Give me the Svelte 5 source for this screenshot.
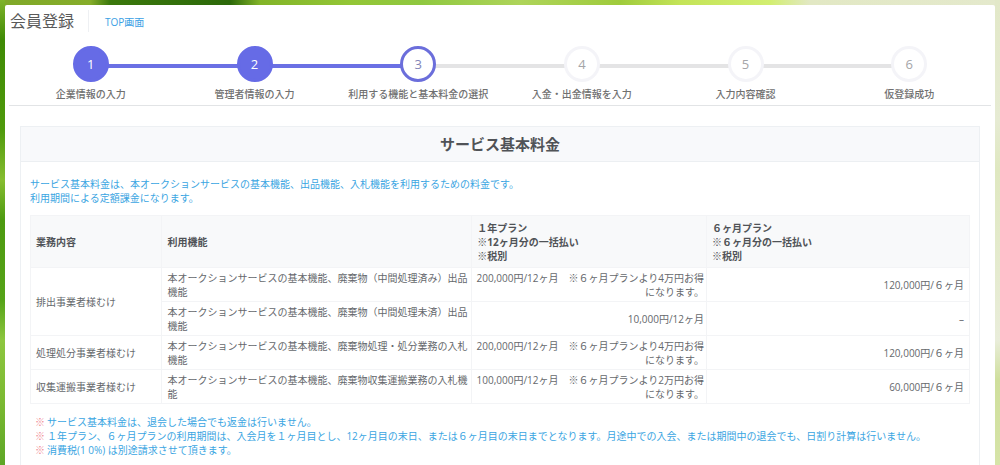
<script lang="ts">
  interface Row {
    target?: string;
    span?: number;
    feature: string;
    yearly: string;
    saving?: string;
    halfYear: string;
  }

  const steps = [
    '企業情報の入力',
    '管理者情報の入力',
    '利用する機能と基本料金の選択',
    '入金・出金情報を入力',
    '入力内容確認',
    '仮登録成功'
  ];
  const current = 3;

  const rows: Row[] = [
    {
      target: '排出事業者様むけ',
      span: 2,
      feature: '本オークションサービスの基本機能、廃棄物（中間処理済み）出品機能',
      yearly: '200,000円/12ヶ月',
      saving: '※６ヶ月プランより4万円お得',
      halfYear: '120,000円/６ヶ月'
    },
    {
      feature: '本オークションサービスの基本機能、廃棄物（中間処理未済）出品機能',
      yearly: '10,000円/12ヶ月',
      halfYear: '–'
    },
    {
      target: '処理処分事業者様むけ',
      feature: '本オークションサービスの基本機能、廃棄物処理・処分業務の入札機能',
      yearly: '200,000円/12ヶ月',
      saving: '※６ヶ月プランより4万円お得',
      halfYear: '120,000円/６ヶ月'
    },
    {
      target: '収集運搬事業者様むけ',
      feature: '本オークションサービスの基本機能、廃棄物収集運搬業務の入札機能',
      yearly: '100,000円/12ヶ月',
      saving: '※６ヶ月プランより2万円お得',
      halfYear: '60,000円/６ヶ月'
    }
  ];

  const notes = [
    'サービス基本料金は、退会した場合でも返金は行いません。',
    '１年プラン、６ヶ月プランの利用期間は、入会月を１ヶ月目とし、12ヶ月目の末日、または６ヶ月目の末日までとなります。月途中での入会、または期間中の退会でも、日割り計算は行いません。',
    '消費税(1 0%) は別途請求させて頂きます。'
  ];
</script>

<div class="page">
  <main class="panel">
    <header class="top">
      <h1>会員登録</h1>
      <a class="home" href="/">TOP画面</a>
    </header>

    <ol class="steps">
      {#each steps as label, i}
        <li class="step" class:done={i + 1 < current} class:active={i + 1 === current}>
          <span class="circle">{i + 1}</span>
          <span class="label">{label}</span>
        </li>
      {/each}
    </ol>

    <section class="card">
      <h2>サービス基本料金</h2>
      <div class="card-body">
        <p class="lead">
          サービス基本料金は、本オークションサービスの基本機能、出品機能、入札機能を利用するための料金です。<br />
          利用期間による定額課金になります。
        </p>

        <table>
          <colgroup>
            <col class="col-target" />
            <col class="col-feature" />
            <col class="col-year" />
            <col />
          </colgroup>
          <thead>
            <tr>
              <th scope="col">業務内容</th>
              <th scope="col">利用機能</th>
              <th scope="col">１年プラン<br />※12ヶ月分の一括払い<br />※税別</th>
              <th scope="col">６ヶ月プラン<br />※６ヶ月分の一括払い<br />※税別</th>
            </tr>
          </thead>
          <tbody>
            {#each rows as row}
              <tr>
                {#if row.target}
                  <td rowspan={row.span ?? 1}>{row.target}</td>
                {/if}
                <td>{row.feature}</td>
                <td class="price">
                  {row.yearly}{#if row.saving}　{row.saving}<br />になります。{/if}
                </td>
                <td class="price">{row.halfYear}</td>
              </tr>
            {/each}
          </tbody>
        </table>

        <ul class="notes">
          {#each notes as note}
            <li><span class="mark">※</span>{note}</li>
          {/each}
        </ul>
      </div>
    </section>
  </main>
</div>

<style>
  :global(body) {
    margin: 0;
  }

  .page {
    box-sizing: border-box;
    min-height: 100vh;
    padding: 5px 5px 0;
    display: flex;
    font-family: 'Open Sans', 'Noto Sans CJK JP', sans-serif;
    font-size: 10px;
    line-height: 14px;
    color: #65686c;
    background:
      linear-gradient(180deg, #7fb32a 0, #3f8a05 40px, #4f9a0c 130px, #86bd30 180px, #4d9a10 220px, #55a318 300px, #8dc63f 340px, #7cba32 400px, #5da626 100%) left / 5px 100% no-repeat,
      linear-gradient(180deg, #e2e8c8 0, #e6ebd3 120px, #dfe8c0 170px, #e9edda 340px, #cfdf9c 380px, #d6e4a8 100%) right / 5px 100% no-repeat,
      linear-gradient(90deg, #7fa828 0, #86ad2a 9%, #3b780c 11%, #2c690a 23%, #82b428 26%, #93c636 35%, #8fc840 42%, #aed45a 52%, #9fcb3c 62%, #c4e458 68%, #d2ee70 77%, #e2e8c4 81%, #e4e9cc 100%);
  }

  .panel {
    flex: 1;
    min-width: 0;
    background: #fff;
    border-radius: 2px 2px 0 0;
  }

  .top {
    display: flex;
    align-items: center;
    gap: 16px;
    padding: 5px 5px 0;
  }

  h1 {
    margin: 0;
    padding-right: 14px;
    border-right: 1px solid #eef0f3;
    font-size: 16px;
    line-height: 22px;
    font-weight: 400;
    color: #5a5a5a;
  }

  .home {
    padding-top: 2px;
    color: #3aa0e4;
    text-decoration: none;
  }

  .steps {
    display: flex;
    margin: 0 4px;
    padding: 14px 0 4px;
    list-style: none;
    border-bottom: 1px solid #e2e4e6;
  }

  .step {
    flex: 1;
    display: flex;
    flex-direction: column;
    align-items: center;
    gap: 5px;
    position: relative;
  }

  /* connector to the next step, running behind both circles */
  .step:not(:last-child)::after {
    content: '';
    position: absolute;
    top: 18px;
    left: 50%;
    width: 100%;
    height: 4px;
    background: #e4e4e5;
  }

  .step.done::after {
    background: #6b70e4;
  }

  .circle {
    position: relative;
    z-index: 1;
    box-sizing: border-box;
    width: 36px;
    height: 36px;
    border: 3px solid #f4f4f8;
    border-radius: 50%;
    background: #fff;
    font-size: 13px;
    line-height: 30px;
    text-align: center;
    color: #a5a5a8;
  }

  .done .circle {
    border-color: #666be6;
    background: #666be6;
    color: #fff;
  }

  .active .circle {
    border-color: #6b6edb;
    color: #8285b8;
  }

  .label {
    font-weight: 500;
    color: #707070;
  }

  .card {
    margin: 20px 15px 0;
    border: 1px solid #edf0f3;
    border-bottom: 0;
  }

  h2 {
    margin: 0;
    padding: 6px 0;
    border-bottom: 1px solid #eceff2;
    background: #f8f9fb;
    font-size: 15px;
    line-height: 22px;
    font-weight: 700;
    text-align: center;
    color: #505357;
  }

  .card-body {
    padding: 15px 9px 8px;
  }

  .lead {
    margin: 0 0 10px;
    color: #3aa5e2;
  }

  table {
    width: 100%;
    table-layout: fixed;
    border-collapse: collapse;
  }

  .col-target {
    width: 14%;
  }

  .col-feature {
    width: 33%;
  }

  .col-year {
    width: 25%;
  }

  th,
  td {
    padding: 3px 2px 2px 5px;
    border: 1px solid #f3f4f6;
    text-align: left;
    font-weight: 400;
  }

  th {
    padding: 5px 5px 4px;
    background: #f8f9fa;
    font-weight: 700;
    color: #505357;
  }

  .price {
    padding-left: 4px;
    text-align: right;
    white-space: nowrap;
  }

  .price:last-child {
    padding-right: 5px;
  }

  .notes {
    margin: 0;
    padding: 11px 5px 0;
    list-style: none;
    color: #3aa5e2;
  }

  .mark {
    margin-right: 2px;
    color: #f08a94;
  }
</style>
